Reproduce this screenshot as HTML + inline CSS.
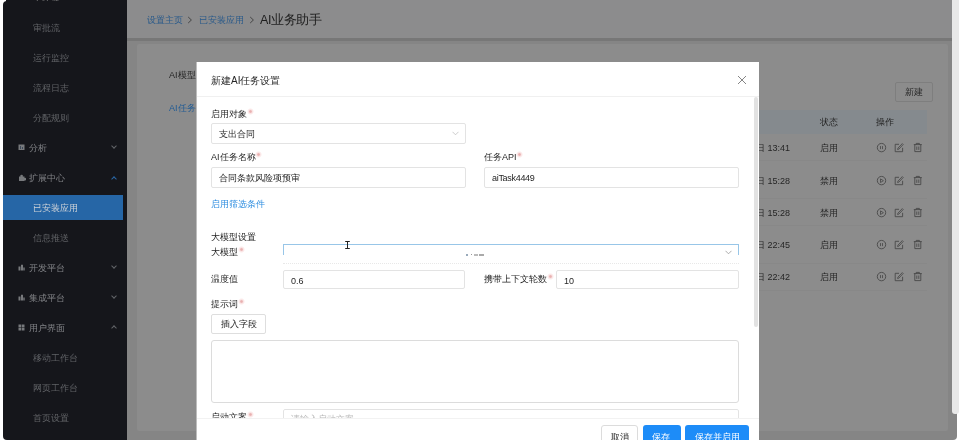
<!DOCTYPE html>
<html><head><meta charset="utf-8">
<style>
*{box-sizing:border-box;margin:0;padding:0}
html,body{width:959px;height:440px;overflow:hidden;background:#fff;font-family:"Liberation Sans",sans-serif}
.a{position:absolute;white-space:nowrap}
#side{position:absolute;left:3px;top:1px;width:124px;height:439px;background:#15161b;border-radius:4px 0 0 4px;overflow:hidden}
.si{position:absolute;left:30px;color:#606266;font-size:9px;line-height:19px;white-space:nowrap}
.sg{position:absolute;left:25.5px;color:#808286;font-size:9px;line-height:19px;white-space:nowrap}
.sq{display:inline-block;width:6px;height:6px;background:#8a8c90;margin-right:3px;vertical-align:0}
.chev{position:absolute;left:109px;width:4px;height:4px;border-right:1px solid #636569;border-bottom:1px solid #636569}
#main{position:absolute;left:127px;top:0;width:830px;height:440px;background:#858585;border-radius:0 0 4px 0}
#hdr{position:absolute;left:127px;top:0;width:826px;height:38px;background:#8c8c8d}
#hline{position:absolute;left:127px;top:38px;width:826px;height:3px;background:#777}
#card{position:absolute;left:137px;top:44px;width:811px;height:387px;background:#8c8c8c;border-radius:2px}
#vscroll{position:absolute;left:952px;top:0;width:7px;height:414px;background:#e8e8e8;border-radius:0 0 3px 3px}
.bt{position:absolute;color:#262626;font-size:9px;line-height:19px;white-space:nowrap}
.rl{position:absolute;left:740px;width:187px;height:1px;background:#888}
#modal{position:absolute;left:196px;top:62px;width:563px;height:378px;background:#fff;overflow:hidden}
.lbl{position:absolute;color:#262626;font-size:9px;line-height:19px;white-space:nowrap}
.req{display:inline-block;width:7px;height:7px;margin-left:-0.5px;vertical-align:2px;background:radial-gradient(circle,#e9b0b0 0,#ecbaba 1px,#f9e2e2 1.8px,#fdf1f1 2.8px,rgba(255,240,240,0) 3.5px)}
.inp{position:absolute;border:1px solid #e3e3e3;border-radius:2px;background:#fff}
.itxt{position:absolute;color:#262626;font-size:9px;line-height:19px;white-space:nowrap}
.btn{position:absolute;border-radius:3px;font-size:9px;line-height:19px;white-space:nowrap}
#wrap{position:absolute;left:0;top:0;width:959px;height:440px;will-change:transform}
</style></head><body><div id="wrap">
<div id="main"></div>
<div id="hdr"></div>
<div id="hline"></div>
<div id="card"></div>
<div id="vscroll"></div>

<!-- breadcrumb -->
<div class="a" style="left:147px;top:11px;font-size:9px;line-height:19px;color:#2a5a8a">设置主页</div>
<svg class="a" style="left:187px;top:16px" width="6" height="8" viewBox="0 0 6 8"><path d="M1.2 1l3.2 3-3.2 3" fill="none" stroke="#3c3c3c" stroke-width="0.9"/></svg>
<div class="a" style="left:199px;top:11px;font-size:9px;line-height:19px;color:#2a5a8a">已安装应用</div>
<svg class="a" style="left:249px;top:16px" width="6" height="8" viewBox="0 0 6 8"><path d="M1.2 1l3.2 3-3.2 3" fill="none" stroke="#3c3c3c" stroke-width="0.9"/></svg>
<div class="a" style="left:260px;top:8.5px;font-size:12.5px;line-height:22px;letter-spacing:-0.4px;color:#1e1e1e">AI业务助手</div>

<!-- background card content -->
<div class="bt" style="left:169px;top:66px">AI模型</div>
<div class="bt" style="left:169px;top:99px;color:#1f5a94">AI任务</div>
<div class="a" style="left:895px;top:82px;width:38px;height:20px;border:1px solid #7e7e7e;border-radius:2px"></div>
<div class="bt" style="left:905px;top:83px">新建</div>
<div class="a" style="left:740px;top:110px;width:187px;height:24px;background:#858a8e"></div>
<div class="bt" style="left:820px;top:113px">状态</div>
<div class="bt" style="left:876px;top:113px">操作</div>

<div class="bt" style="right:169px;top:139px">2024年05月06日 13:41</div>
<div class="bt" style="left:820px;top:139px">启用</div>
<svg class="a" style="left:876px;top:142px" width="12" height="12" viewBox="0 0 12 12"><circle cx="5.5" cy="5.6" r="4.2" fill="none" stroke="#454545" stroke-width="0.85"/><path d="M4.5 4.1v3M6.5 4.1v3" stroke="#454545" stroke-width="0.8"/></svg>
<svg class="a" style="left:893px;top:142px" width="12" height="12" viewBox="0 0 12 12"><path d="M6 2.3H2.2v7.4h7.4V5.8" fill="none" stroke="#454545" stroke-width="0.85"/><path d="M9.3 1.6l.9.9-4.3 4.6-1.3.4.3-1.3z" fill="none" stroke="#454545" stroke-width="0.8"/></svg>
<svg class="a" style="left:912px;top:142px" width="12" height="12" viewBox="0 0 12 12"><path d="M1.8 2.6h8M4.2 2.6V1.4h3.2v1.2M2.8 2.6v7h6v-7M4.8 4.5v3.4M6.8 4.5v3.4" fill="none" stroke="#454545" stroke-width="0.85"/></svg>
<div class="rl" style="top:160px"></div>
<div class="bt" style="right:169px;top:171.5px">2024年05月06日 15:28</div>
<div class="bt" style="left:820px;top:171.5px">禁用</div>
<svg class="a" style="left:876px;top:174.5px" width="12" height="12" viewBox="0 0 12 12"><circle cx="5.5" cy="5.6" r="4.2" fill="none" stroke="#454545" stroke-width="0.85"/><path d="M4.5 3.9v3.6l2.9-1.8z" fill="none" stroke="#454545" stroke-width="0.8" stroke-linejoin="round"/></svg>
<svg class="a" style="left:893px;top:174.5px" width="12" height="12" viewBox="0 0 12 12"><path d="M6 2.3H2.2v7.4h7.4V5.8" fill="none" stroke="#454545" stroke-width="0.85"/><path d="M9.3 1.6l.9.9-4.3 4.6-1.3.4.3-1.3z" fill="none" stroke="#454545" stroke-width="0.8"/></svg>
<svg class="a" style="left:912px;top:174.5px" width="12" height="12" viewBox="0 0 12 12"><path d="M1.8 2.6h8M4.2 2.6V1.4h3.2v1.2M2.8 2.6v7h6v-7M4.8 4.5v3.4M6.8 4.5v3.4" fill="none" stroke="#454545" stroke-width="0.85"/></svg>
<div class="rl" style="top:198px"></div>
<div class="bt" style="right:169px;top:203.5px">2024年05月06日 15:28</div>
<div class="bt" style="left:820px;top:203.5px">禁用</div>
<svg class="a" style="left:876px;top:206.5px" width="12" height="12" viewBox="0 0 12 12"><circle cx="5.5" cy="5.6" r="4.2" fill="none" stroke="#454545" stroke-width="0.85"/><path d="M4.5 3.9v3.6l2.9-1.8z" fill="none" stroke="#454545" stroke-width="0.8" stroke-linejoin="round"/></svg>
<svg class="a" style="left:893px;top:206.5px" width="12" height="12" viewBox="0 0 12 12"><path d="M6 2.3H2.2v7.4h7.4V5.8" fill="none" stroke="#454545" stroke-width="0.85"/><path d="M9.3 1.6l.9.9-4.3 4.6-1.3.4.3-1.3z" fill="none" stroke="#454545" stroke-width="0.8"/></svg>
<svg class="a" style="left:912px;top:206.5px" width="12" height="12" viewBox="0 0 12 12"><path d="M1.8 2.6h8M4.2 2.6V1.4h3.2v1.2M2.8 2.6v7h6v-7M4.8 4.5v3.4M6.8 4.5v3.4" fill="none" stroke="#454545" stroke-width="0.85"/></svg>
<div class="rl" style="top:225px"></div>
<div class="bt" style="right:169px;top:235.5px">2024年05月05日 22:45</div>
<div class="bt" style="left:820px;top:235.5px">启用</div>
<svg class="a" style="left:876px;top:238.5px" width="12" height="12" viewBox="0 0 12 12"><circle cx="5.5" cy="5.6" r="4.2" fill="none" stroke="#454545" stroke-width="0.85"/><path d="M4.5 4.1v3M6.5 4.1v3" stroke="#454545" stroke-width="0.8"/></svg>
<svg class="a" style="left:893px;top:238.5px" width="12" height="12" viewBox="0 0 12 12"><path d="M6 2.3H2.2v7.4h7.4V5.8" fill="none" stroke="#454545" stroke-width="0.85"/><path d="M9.3 1.6l.9.9-4.3 4.6-1.3.4.3-1.3z" fill="none" stroke="#454545" stroke-width="0.8"/></svg>
<svg class="a" style="left:912px;top:238.5px" width="12" height="12" viewBox="0 0 12 12"><path d="M1.8 2.6h8M4.2 2.6V1.4h3.2v1.2M2.8 2.6v7h6v-7M4.8 4.5v3.4M6.8 4.5v3.4" fill="none" stroke="#454545" stroke-width="0.85"/></svg>
<div class="rl" style="top:263px"></div>
<div class="bt" style="right:169px;top:267.5px">2024年05月05日 22:42</div>
<div class="bt" style="left:820px;top:267.5px">启用</div>
<svg class="a" style="left:876px;top:270.5px" width="12" height="12" viewBox="0 0 12 12"><circle cx="5.5" cy="5.6" r="4.2" fill="none" stroke="#454545" stroke-width="0.85"/><path d="M4.5 4.1v3M6.5 4.1v3" stroke="#454545" stroke-width="0.8"/></svg>
<svg class="a" style="left:893px;top:270.5px" width="12" height="12" viewBox="0 0 12 12"><path d="M6 2.3H2.2v7.4h7.4V5.8" fill="none" stroke="#454545" stroke-width="0.85"/><path d="M9.3 1.6l.9.9-4.3 4.6-1.3.4.3-1.3z" fill="none" stroke="#454545" stroke-width="0.8"/></svg>
<svg class="a" style="left:912px;top:270.5px" width="12" height="12" viewBox="0 0 12 12"><path d="M1.8 2.6h8M4.2 2.6V1.4h3.2v1.2M2.8 2.6v7h6v-7M4.8 4.5v3.4M6.8 4.5v3.4" fill="none" stroke="#454545" stroke-width="0.85"/></svg>
<div class="rl" style="top:290px"></div>

<!-- sidebar -->
<div class="a" style="left:6px;top:0;width:121px;height:2px;background:#15161b"></div>
<div class="si" style="left:33px;top:-9.5px;color:#8a8a8a">工作流</div>
<div id="side">
  <div class="a" style="left:0;top:-1px;width:124px;height:1px;background:#6a6a6a"></div>
  <div class="si" style="top:18px">审批流</div>
  <div class="si" style="top:48px">运行监控</div>
  <div class="si" style="top:78px">流程日志</div>
  <div class="si" style="top:108px">分配规则</div>
  <svg class="a" style="left:15px;top:143px" width="7" height="7" viewBox="0 0 7 7"><rect x="0.5" y="0.5" width="6" height="5.5" fill="#77797c"/><rect x="2" y="2" width="1" height="3" fill="#3d4a5a"/><rect x="4" y="3" width="1" height="2" fill="#3d4a5a"/></svg>
  <div class="sg" style="top:138px">分析</div>
  <div class="chev" style="top:143px;transform:rotate(45deg)"></div>
  <svg class="a" style="left:15px;top:173px" width="8" height="7" viewBox="0 0 8 7"><path d="M1 2.5h1.5a1.2 1.2 0 1 1 2.2 0H6.5v1.5a1.2 1.2 0 1 1 0 2.2V7H1z" fill="#77797c"/></svg>
  <div class="sg" style="top:168px">扩展中心</div>
  <div class="chev" style="top:176px;transform:rotate(-135deg);border-color:#2a68a8"></div>
  <div class="a" style="left:0;top:194px;width:120px;height:25px;background:#2666a6"></div>
  <div class="si" style="top:198px;color:#cfd3d8">已安装应用</div>
  <div class="si" style="top:228px">信息推送</div>
  <svg class="a" style="left:15px;top:263px" width="7" height="7" viewBox="0 0 7 7"><path d="M0.5 6.5V2.5h2V6.5zM3 6.5V0.8h2V6.5zM5.3 6.5V3.5h1.4v3z" fill="#77797c"/></svg>
  <div class="sg" style="top:258px">开发平台</div>
  <div class="chev" style="top:263px;transform:rotate(45deg)"></div>
  <svg class="a" style="left:15px;top:293px" width="7" height="7" viewBox="0 0 7 7"><path d="M0.5 6.5V2.5h2V6.5zM3 6.5V0.8h2V6.5zM5.3 6.5V3.5h1.4v3z" fill="#77797c"/></svg>
  <div class="sg" style="top:288px">集成平台</div>
  <div class="chev" style="top:293px;transform:rotate(45deg)"></div>
  <svg class="a" style="left:15px;top:323px" width="7" height="7" viewBox="0 0 7 7"><path d="M0.5 0.5h2.7v2.7H0.5zM3.8 0.5h2.7v2.7H3.8zM0.5 3.8h2.7v2.7H0.5zM3.8 3.8h2.7v2.7H3.8z" fill="#77797c"/></svg>
  <div class="sg" style="top:318px">用户界面</div>
  <div class="chev" style="top:325px;transform:rotate(-135deg)"></div>
  <div class="si" style="top:348px">移动工作台</div>
  <div class="si" style="top:378px">网页工作台</div>
  <div class="si" style="top:408px">首页设置</div>
</div>

<!-- modal -->
<div id="modal">
  <div class="a" style="left:15px;top:9px;font-size:10px;line-height:20px;color:#262626">新建AI任务设置</div>
  <svg class="a" style="left:541px;top:13px" width="10" height="10" viewBox="0 0 10 10"><path d="M1 1l8 8M9 1l-8 8" stroke="#777" stroke-width="0.9"/></svg>
  <div class="a" style="left:0;top:34px;width:563px;height:1px;background:#f0f0f0"></div>
  <div class="a" style="left:558px;top:35px;width:4px;height:230px;background:#e2e2e2;border-radius:2px"></div>

  <div class="lbl" style="left:15px;top:43px">启用对象<span class="req"></span></div>
  <div class="inp" style="left:15px;top:61px;width:255px;height:21px"></div>
  <div class="itxt" style="left:23px;top:63px">支出合同</div>
  <svg class="a" style="left:256px;top:69px" width="7" height="5" viewBox="0 0 7 5"><path d="M0.5 0.8l3 3 3-3" fill="none" stroke="#c0c0c0" stroke-width="0.8"/></svg>

  <div class="lbl" style="left:15px;top:86px">AI任务名称<span class="req"></span></div>
  <div class="inp" style="left:15px;top:105px;width:255px;height:21px"></div>
  <div class="itxt" style="left:23px;top:107px">合同条款风险项预审</div>

  <div class="lbl" style="left:288px;top:86px">任务API<span class="req"></span></div>
  <div class="inp" style="left:288px;top:105px;width:255px;height:21px"></div>
  <div class="itxt" style="left:296px;top:107px;letter-spacing:-0.3px">aiTask4449</div>

  <div class="lbl" style="left:15px;top:133px;color:#2f8ee0">启用筛选条件</div>

  <div class="lbl" style="left:15px;top:166px">大模型设置</div>
  <div class="lbl" style="left:15px;top:181px">大模型<span class="req"></span></div>
  <div class="a" style="left:87px;top:182px;width:456px;height:11px;border:1px solid #98c6e8;border-bottom:none"></div>
  <svg class="a" style="left:148px;top:179px" width="6" height="9" viewBox="0 0 6 9"><path d="M1.2 .5h4.6M3.5 .5v7M1.2 7.5h4.6" stroke="#222" stroke-width="1"/></svg>
  <svg class="a" style="left:529px;top:188px" width="7" height="5" viewBox="0 0 7 5"><path d="M0.5 0.8l3 3 3-3" fill="none" stroke="#999" stroke-width="0.8"/></svg>
  <div class="a" style="left:87px;top:201px;width:456px;height:0;border-top:1px dotted #e8e8e8"></div>
  <div class="a" style="left:270px;top:192px;width:2px;height:2px;background:#9ab"></div><div class="a" style="left:275px;top:192px;width:1px;height:1px;background:#999"></div><div class="a" style="left:278px;top:192px;width:4px;height:2px;background:#bbb"></div><div class="a" style="left:283px;top:192px;width:5px;height:2px;background:#aaa"></div>

  <div class="lbl" style="left:15px;top:208px">温度值</div>
  <div class="inp" style="left:87px;top:208px;width:182px;height:19px"></div>
  <div class="itxt" style="left:95px;top:210px">0.6</div>

  <div class="lbl" style="left:288px;top:208px">携带上下文轮数<span class="req"></span></div>
  <div class="inp" style="left:360px;top:208px;width:183px;height:19px"></div>
  <div class="itxt" style="left:368px;top:210px">10</div>

  <div class="lbl" style="left:15px;top:233px">提示词<span class="req"></span></div>
  <div class="inp" style="left:15px;top:252px;width:55px;height:20px;border-style:solid;border-color:#dedede"></div>
  <div class="itxt" style="left:25px;top:253px">插入字段</div>
  <div class="inp" style="left:15px;top:278px;width:528px;height:63px;border-style:solid;border-color:#dcdcdc;border-radius:3px"></div>

  <div class="lbl" style="left:15px;top:346px">启动文案<span class="req"></span></div>
  <div class="inp" style="left:87px;top:347px;width:456px;height:20px"></div>
  <div class="itxt" style="left:95px;top:348px;color:#bbb">请输入启动文案</div>

  <div class="a" style="left:0;top:356px;width:563px;height:30px;background:#fff;border-top:1px solid #f2f2f2"></div>
  <div class="btn" style="left:405px;top:363px;width:37px;height:20px;border:1px solid #dcdcdc;background:#fff;color:#333"></div>
  <div class="itxt" style="left:415px;top:366px">取消</div>
  <div class="btn" style="left:447px;top:363px;width:38px;height:20px;background:#1d8cf8"></div>
  <div class="itxt" style="left:456px;top:366px;color:#fff">保存</div>
  <div class="btn" style="left:489px;top:363px;width:64px;height:20px;background:#1d8cf8"></div>
  <div class="itxt" style="left:499px;top:366px;color:#fff">保存并启用</div>
  <div class="a" style="left:0;top:0;width:1px;height:378px;background:#bdbdbd"></div>
</div>
</div></body></html>
